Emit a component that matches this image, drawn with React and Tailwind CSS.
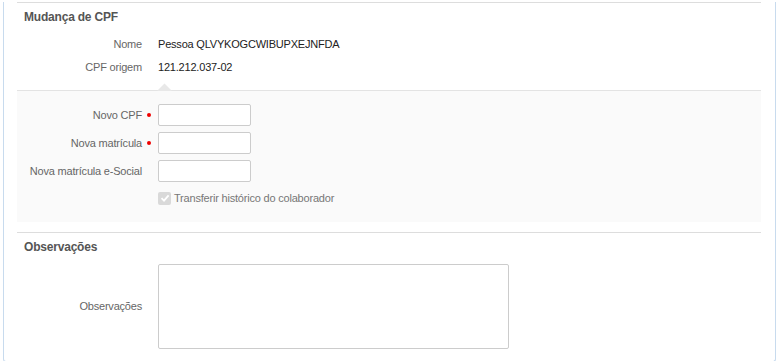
import React from 'react';

const Label = ({ children, required }) => (
  <div className="flex w-[126px] shrink-0 items-center justify-end whitespace-nowrap pr-[1px] text-[#666]">
    <span>{children}</span>
    {required ? (
      <span className="ml-[5px] -mr-[9px] h-[4px] w-[4px] rounded-full bg-[#e00]" />
    ) : null}
  </div>
);

const InfoRow = ({ label, value }) => (
  <div className="flex h-[23px] items-center">
    <Label>{label}</Label>
    <div className="ml-[15px] text-[#222]">{value}</div>
  </div>
);

const InputRow = ({ label, required }) => (
  <div className="flex h-[22px] items-center">
    <Label required={required}>{label}</Label>
    <input
      type="text"
      className="ml-[15px] h-[22px] w-[93px] rounded-[2px] border border-[#ccc] bg-white outline-none"
    />
  </div>
);

export default function App() {
  return (
    <div className="h-[361px] w-[778px] bg-white font-['Liberation_Sans',Arial,sans-serif] text-[11px] tracking-[-0.2px]">
      <div className="ml-[3px] h-[360px] w-[773px] rounded-b-[3px] border-x border-b border-[#c8dbee] pl-[13px] pr-[14px]">
        {/* Mudança de CPF */}
        <div className="mt-[2px] border-t border-[#ddd]">
          <div className="flex h-[27px] items-center pl-[7px] text-[12px] font-bold text-[#555]">
            Mudança de CPF
          </div>
          <div className="pt-[3px] pb-[11px]">
            <InfoRow label="Nome" value="Pessoa QLVYKOGCWIBUPXEJNFDA" />
            <InfoRow label="CPF origem" value="121.212.037-02" />
          </div>
        </div>

        <div className="relative border-t border-[#e3e3e3] bg-[#fafafa] pt-[13px] pb-[14px]">
          <svg className="absolute -top-[8px] left-[140px]" width="15" height="8" viewBox="0 0 15 8">
            <polygon points="0,8 7.5,0.5 15,8" fill="#e8e8e8" />
          </svg>
          <div className="flex flex-col gap-[6px]">
            <InputRow label="Novo CPF" required />
            <InputRow label="Nova matrícula" required />
            <InputRow label="Nova matrícula e-Social" />
            <div className="flex h-[20px] items-center">
              <div className="w-[126px] shrink-0" />
              <label className="ml-[15px] flex items-center text-[#777]">
                <span className="flex h-[13px] w-[13px] items-center justify-center rounded-[2px] bg-[#d9d9d9]">
                  <svg width="10" height="10" viewBox="0 0 10 10">
                    <path d="M1.5 5.2 L4 7.6 L8.6 2.4" fill="none" stroke="#fff" strokeWidth="1.8" />
                  </svg>
                </span>
                <span className="ml-[3px]">Transferir histórico do colaborador</span>
              </label>
            </div>
          </div>
        </div>

        {/* Observações */}
        <div className="mt-[10px] border-t border-[#ddd] pb-[10px]">
          <div className="flex h-[27px] items-center pl-[7px] text-[12px] font-bold text-[#555]">
            Observações
          </div>
          <div className="mt-[4px] flex items-center">
            <Label>Observações</Label>
            <textarea className="ml-[15px] block h-[85px] w-[351px] resize-none rounded-[2px] border border-[#ccc] bg-white outline-none" />
          </div>
        </div>
      </div>
    </div>
  );
}
